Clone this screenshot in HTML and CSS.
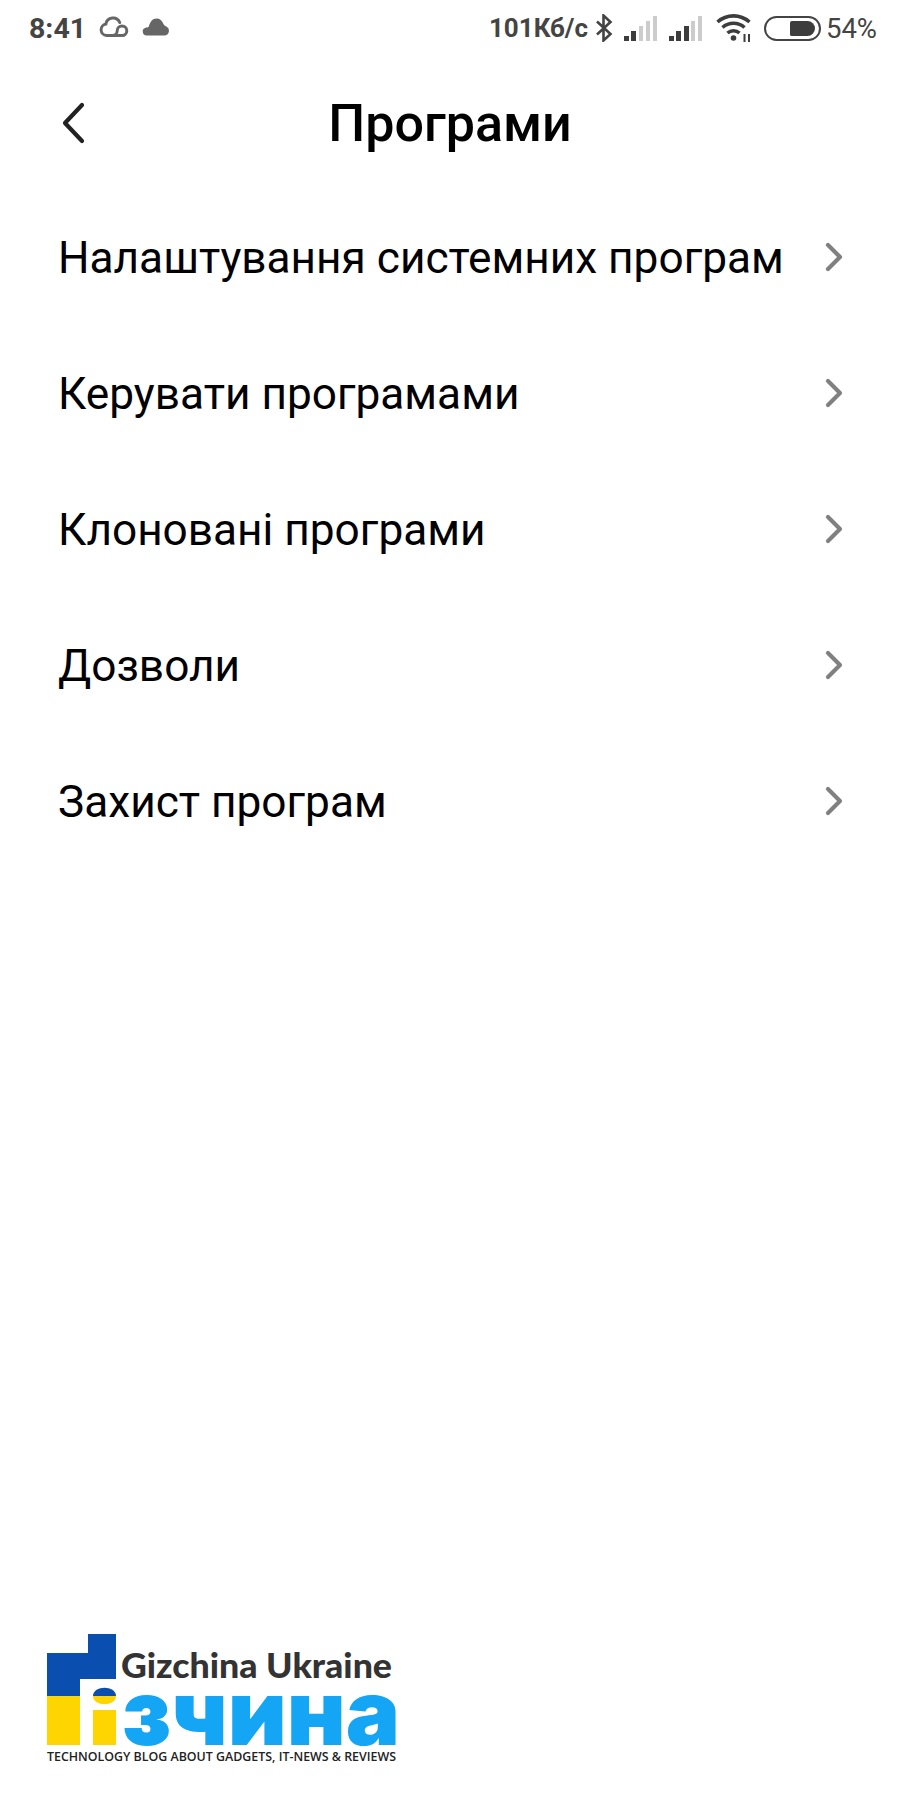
FILE: index.html
```html
<!DOCTYPE html>
<html lang="uk">
<head>
    <meta charset="UTF-8">
    <meta name="viewport" content="width=device-width, initial-scale=1.0">
    <title>Програми</title>
    <link rel="stylesheet" href="styles.css">
</head>
<body>
    <div class="page">
        <div class="status-bar">
            <div class="status-left">
                <span class="time">8:41</span>
                <svg class="cloud-outline" width="30" height="22" viewBox="0 0 30 22"><path d="M23 19.500a4.800 4.800 0 1 0 -4.800 -4.800a4.800 4.800 0 0 1 -4.800 4.800H7.500a5.800 5.800 0 0 1 -.6 -11.500a7.200 7.200 0 0 1 13.800 -1.500M23 19.500H13" fill="none" stroke="#666" stroke-width="3" stroke-linecap="round"/></svg>
                <svg class="cloud-solid" width="28" height="18" viewBox="0 0 28 18"><path d="M4.500 17.500a4 4 0 0 1 -1 -7.800c1 -.2 2.400 -.3 3.200 -1C8 4 10.500 .5 14.500 .5c3.500 0 5.500 2 7 5.500c.5 1.200 1.500 1.800 2.800 2.500a4.800 4.800 0 0 1 -1.300 9z" fill="#666"/></svg>
            </div>
            <div class="status-right">
                <span class="speed">101Кб/с</span>
                <svg class="bluetooth" width="18" height="28" viewBox="0 0 18 28"><path d="M2 7.500l13.500 12.500l-7 6.500v-25l7 6.500l-13.500 12.500" fill="none" stroke="#444" stroke-width="2.600"/></svg>
                <svg class="signal" width="34" height="25" viewBox="0 0 34 25"><rect x="0" y="20" width="5" height="5" fill="#3d3d3d"/><rect x="7" y="15" width="5" height="10" fill="#3d3d3d"/><rect x="15" y="10" width="4" height="15" fill="#ccc"/><rect x="22" y="5" width="4" height="20" fill="#ccc"/><rect x="29" y="0" width="4" height="25" fill="#ccc"/></svg>
                <svg class="signal" width="34" height="25" viewBox="0 0 34 25"><rect x="0" y="20" width="5" height="5" fill="#3d3d3d"/><rect x="7" y="15" width="5" height="10" fill="#3d3d3d"/><rect x="15" y="10" width="5" height="15" fill="#3d3d3d"/><rect x="22" y="5" width="4" height="20" fill="#ccc"/><rect x="29" y="0" width="4" height="25" fill="#ccc"/></svg>
                <svg class="wifi" width="36" height="28" viewBox="0 0 36 28"><path d="M1.500 8a24 24 0 0 1 32 0M6.500 13.500a16.500 16.500 0 0 1 22 0M11.500 19a9 9 0 0 1 12 0" fill="none" stroke="#3d3d3d" stroke-width="3.600"/><circle cx="17.500" cy="24" r="2.800" fill="#3d3d3d"/><path d="M28.500 20v8M33 20v8" stroke="#3d3d3d" stroke-width="2"/></svg>
                <div class="battery"><div class="battery-level"></div></div>
                <span class="percent">54%</span>
            </div>
        </div>

        <div class="header">
            <svg class="back" width="24" height="42" viewBox="0 0 24 42"><path d="M21 3L4 21l17 18" fill="none" stroke="#222" stroke-width="4.200" stroke-linecap="round" stroke-linejoin="round"/></svg>
            <h1>Програми</h1>
        </div>

        <div class="menu">
            <div class="menu-item">
                <span>Налаштування системних програм</span>
                <svg class="chevron" width="18" height="30" viewBox="0 0 18 30"><path d="M3 3l12 12L3 27" fill="none" stroke="#808080" stroke-width="4.200" stroke-linecap="round" stroke-linejoin="round"/></svg>
            </div>
            <div class="menu-item">
                <span>Керувати програмами</span>
                <svg class="chevron" width="18" height="30" viewBox="0 0 18 30"><path d="M3 3l12 12L3 27" fill="none" stroke="#808080" stroke-width="4.200" stroke-linecap="round" stroke-linejoin="round"/></svg>
            </div>
            <div class="menu-item">
                <span>Клоновані програми</span>
                <svg class="chevron" width="18" height="30" viewBox="0 0 18 30"><path d="M3 3l12 12L3 27" fill="none" stroke="#808080" stroke-width="4.200" stroke-linecap="round" stroke-linejoin="round"/></svg>
            </div>
            <div class="menu-item">
                <span>Дозволи</span>
                <svg class="chevron" width="18" height="30" viewBox="0 0 18 30"><path d="M3 3l12 12L3 27" fill="none" stroke="#808080" stroke-width="4.200" stroke-linecap="round" stroke-linejoin="round"/></svg>
            </div>
            <div class="menu-item">
                <span>Захист програм</span>
                <svg class="chevron" width="18" height="30" viewBox="0 0 18 30"><path d="M3 3l12 12L3 27" fill="none" stroke="#808080" stroke-width="4.200" stroke-linecap="round" stroke-linejoin="round"/></svg>
            </div>
        </div>

        <svg class="logo" width="360" height="136" viewBox="0 0 360 136">
            <path d="M1 19H42V0H70V45H34V62H1z" fill="#0a4fb0"/>
            <rect x="1" y="62" width="33" height="49" fill="#ffd500"/>
            <path d="M47 62c0 -11 23 -11 23 0z" fill="#0a4fb0"/>
            <path d="M47 62h23c0 11 -23 11 -23 0z" fill="#ffd500"/>
            <rect x="47" y="76" width="23" height="35" fill="#ffd500"/>
            <text class="logo-name" x="75" y="44" textLength="271" lengthAdjust="spacingAndGlyphs">Gizchina Ukraine</text>
            <text class="logo-big" x="76" y="111" textLength="278" lengthAdjust="spacingAndGlyphs">зчина</text>
            <text class="logo-tag" x="1" y="127" textLength="349" lengthAdjust="spacingAndGlyphs">TECHNOLOGY BLOG ABOUT GADGETS, IT-NEWS &amp; REVIEWS</text>
        </svg>
    </div>
</body>
</html>
```

FILE: styles.css
```css
* {
    box-sizing: border-box;
}
body {
    margin: 0;
    background: #ffffff;
    font-family: Roboto, "Liberation Sans", sans-serif;
    color: #000000;
}
.page {
    height: 1800px;
    display: flex;
    flex-direction: column;
}
.status-bar {
    height: 56px;
    padding: 0 23px 0 29px;
    display: flex;
    align-items: center;
    justify-content: space-between;
    color: #444444;
}
.status-left,
.status-right {
    display: flex;
    align-items: center;
}
.time {
    font-size: 28.500px;
    font-weight: 700;
    margin-right: 13px;
}
.cloud-outline,
.cloud-solid {
    margin-bottom: 2px;
}
.cloud-solid {
    margin-left: 13px;
}
.speed {
    font-size: 26px;
    font-weight: 700;
    margin-right: 7px;
}
.signal {
    margin-left: 11px;
}
.wifi {
    margin-left: 13px;
}
.battery {
    width: 57px;
    height: 25px;
    margin-left: 12px;
    padding: 3px 4px 3px 24px;
    border: 2.500px solid #444444;
    border-radius: 13px;
}
.battery-level {
    height: 100%;
    background: #3d3d3d;
    border-radius: 2px 8px 8px 2px;
}
.percent {
    font-size: 27.500px;
    margin-left: 5px;
}
.header {
    height: 134px;
    padding: 0 61px;
    display: grid;
    grid-template-columns: 1fr auto 1fr;
    align-items: center;
}
h1 {
    margin: 0;
    font-size: 52px;
    font-weight: 500;
}
.menu-item {
    height: 136px;
    padding: 0 57px 0 58px;
    display: flex;
    align-items: center;
    justify-content: space-between;
    font-size: 44.200px;
}
.chevron {
    margin-bottom: 2px;
}
.logo {
    margin: auto 0 30px 46px;
}
.logo-name {
    font-family: Lato, sans-serif;
    font-weight: 900;
    font-size: 34px;
    fill: #333333;
}
.logo-big {
    font-family: Inter, sans-serif;
    font-weight: 900;
    font-size: 90px;
    fill: #14a5f5;
}
.logo-tag {
    font-family: "Open Sans", sans-serif;
    font-weight: 600;
    font-size: 12px;
    fill: #222222;
}
```
